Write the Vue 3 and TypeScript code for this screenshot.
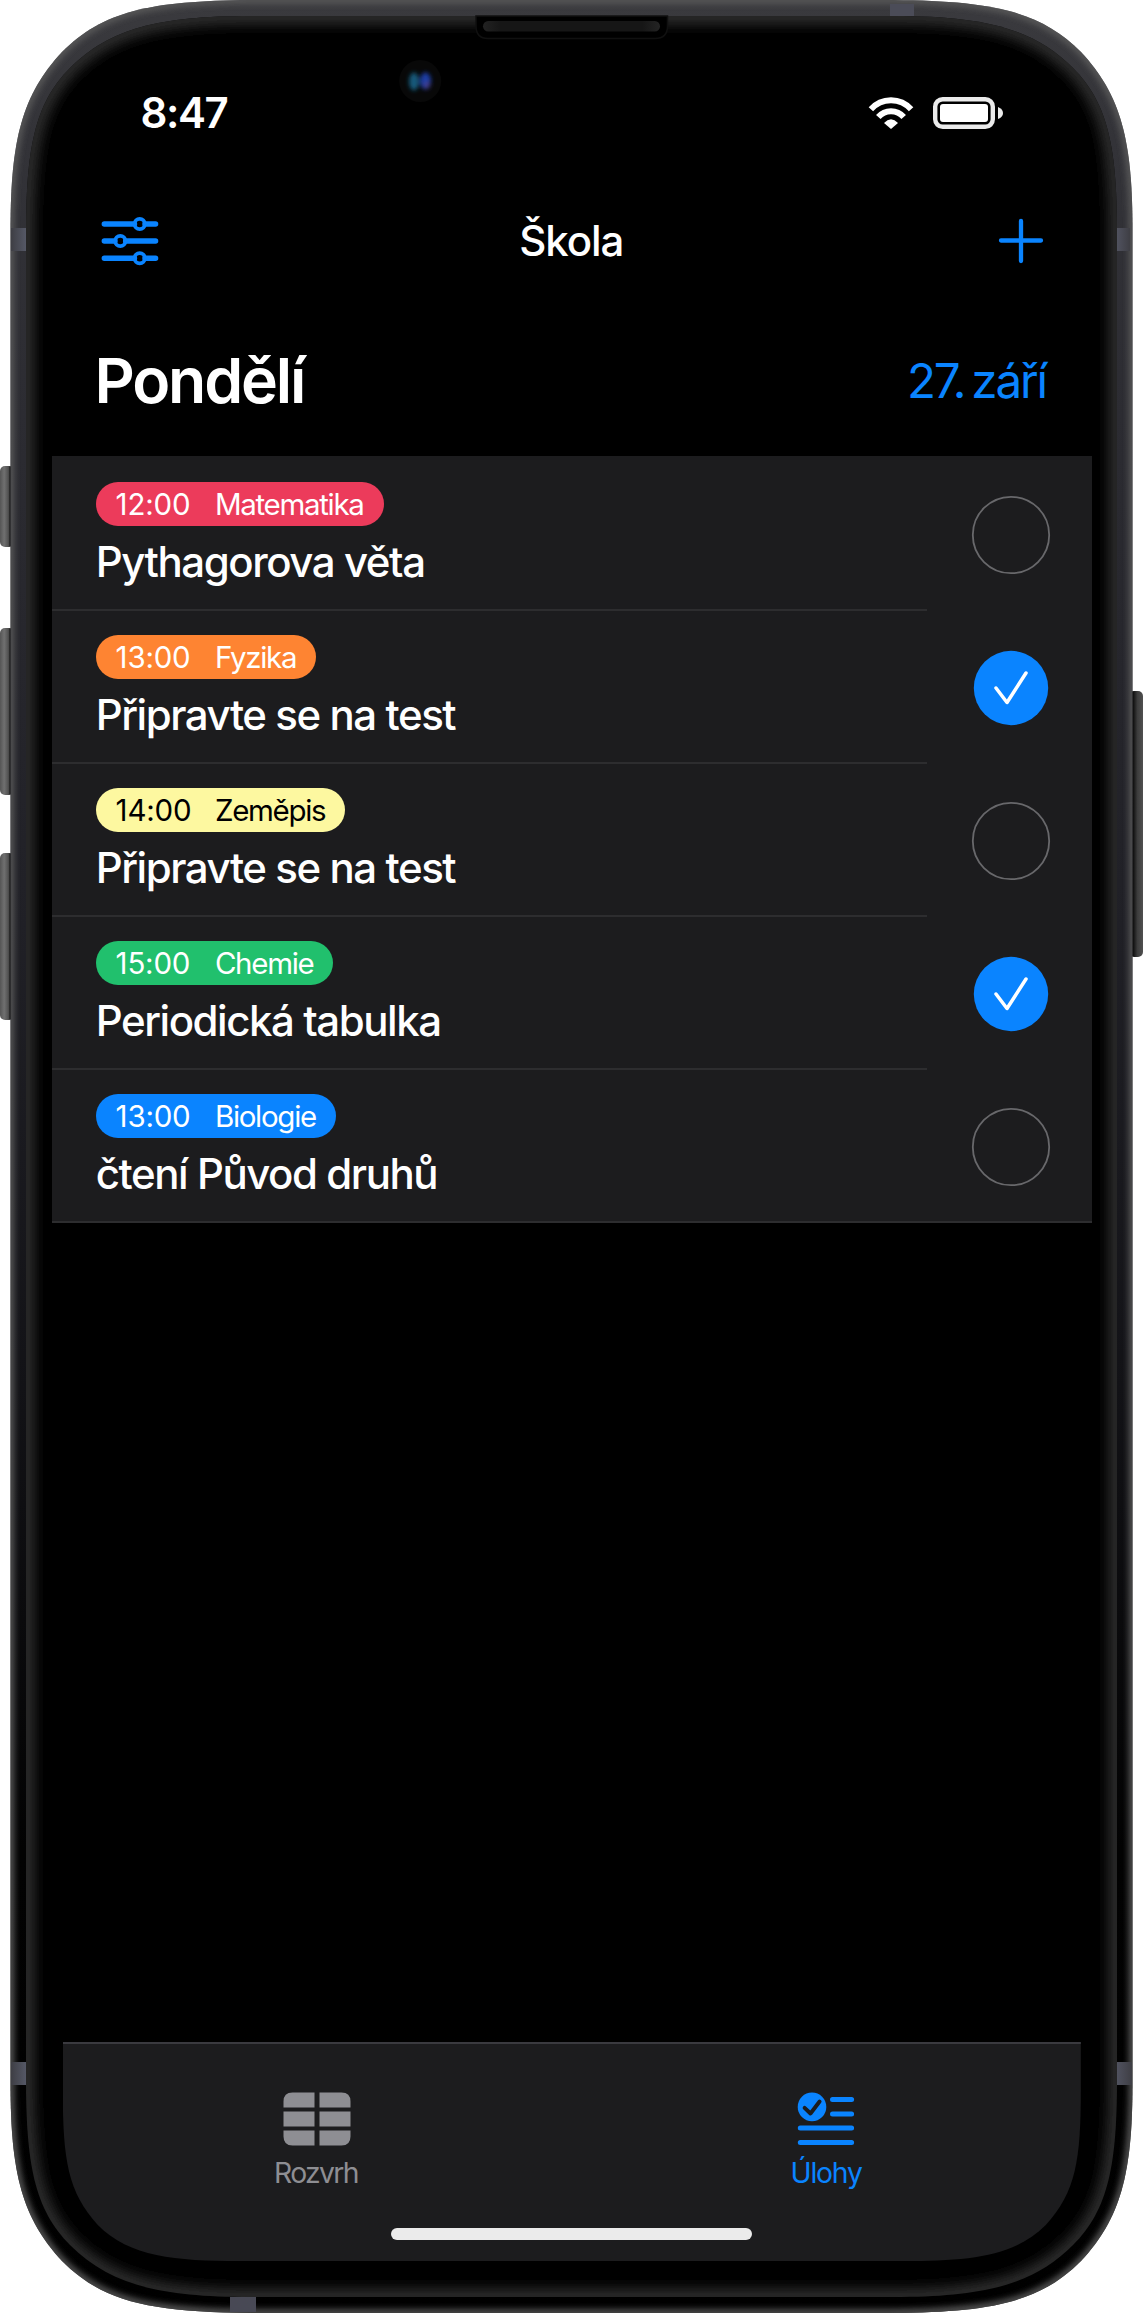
<script setup lang="ts">
interface Task {
  time: string
  subject: string
  title: string
  color: string
  ink: string
  done: boolean
}

const tasks: Task[] = [
  { time: '12:00', subject: 'Matematika', title: 'Pythagorova věta', color: '#ec3b5b', ink: '#fff', done: false },
  { time: '13:00', subject: 'Fyzika', title: 'Připravte se na test', color: '#fe8432', ink: '#fff', done: true },
  { time: '14:00', subject: 'Zeměpis', title: 'Připravte se na test', color: '#fdf8a0', ink: '#000', done: false },
  { time: '15:00', subject: 'Chemie', title: 'Periodická tabulka', color: '#21c06d', ink: '#fff', done: true },
  { time: '13:00', subject: 'Biologie', title: 'čtení Původ druhů', color: '#0a84ff', ink: '#fff', done: false },
]

const outer =
  'M10.5 230C10.5 140 22 95 62 52C103 11 150 1 250 0H893C993 1 1040 11 1081 52C1121 95 1132.5 140 1132.5 230V2083C1132.5 2173 1121 2218 1081 2261C1040 2302 993 2312 893 2313H250C150 2312 103 2302 62 2261C22 2218 10.5 2173 10.5 2083Z'
const inner =
  'M26 235C26 150 34 104 70 68C110 28 160 16 250 16H893C983 16 1033 28 1073 68C1109 104 1117 150 1117 235V2078C1117 2163 1109 2209 1073 2245C1033 2285 983 2297 893 2297H250C160 2297 110 2285 70 2245C34 2209 26 2163 26 2078Z'
</script>

<template>
  <main class="device">
    <svg class="shell" width="1143" height="2313" viewBox="0 0 1143 2313" aria-hidden="true">
      <defs>
        <linearGradient id="metal" x1="0" y1="0" x2="0" y2="1">
          <stop offset="0" stop-color="#3a3a3e" />
          <stop offset=".06" stop-color="#333338" />
          <stop offset=".18" stop-color="#2c2c32" />
          <stop offset=".4" stop-color="#202026" />
          <stop offset=".6" stop-color="#121216" />
          <stop offset=".8" stop-color="#020202" />
          <stop offset="1" stop-color="#000" />
        </linearGradient>
        <linearGradient id="keyLeft">
          <stop offset="0" stop-color="#555" />
          <stop offset=".3" stop-color="#707070" />
          <stop offset=".6" stop-color="#505050" />
          <stop offset=".75" stop-color="#080808" />
        </linearGradient>
        <linearGradient id="keyRight">
          <stop offset=".25" stop-color="#080808" />
          <stop offset=".6" stop-color="#3c3c3c" />
          <stop offset="1" stop-color="#505050" />
        </linearGradient>
        <linearGradient id="bandLeft">
          <stop offset="0" stop-color="#3e3e44" />
          <stop offset="1" stop-color="#555866" />
        </linearGradient>
        <linearGradient id="bandRight">
          <stop offset="0" stop-color="#50525f" />
          <stop offset="1" stop-color="#3e3e44" />
        </linearGradient>
        <linearGradient id="speaker">
          <stop offset="0" stop-color="#222" />
          <stop offset=".1" stop-color="#161616" />
          <stop offset=".9" stop-color="#161616" />
          <stop offset="1" stop-color="#242424" />
        </linearGradient>
        <filter id="soft" x="-5%" y="-5%" width="110%" height="110%"><feGaussianBlur stdDeviation="3" /></filter>
        <filter id="glow" x="-5%" y="-5%" width="110%" height="110%"><feGaussianBlur stdDeviation="6.5" /></filter>
        <filter id="lens" x="-50%" y="-50%" width="200%" height="200%"><feGaussianBlur stdDeviation="2.2" /></filter>
        <clipPath id="outerClip"><path :d="outer" /></clipPath>
        <clipPath id="innerClip"><path :d="inner" /></clipPath>
      </defs>

      <rect x="0" y="466" width="14" height="81" rx="5" fill="url(#keyLeft)" />
      <rect x="0" y="628" width="14" height="167" rx="5" fill="url(#keyLeft)" />
      <rect x="0" y="853" width="14" height="167" rx="5" fill="url(#keyLeft)" />
      <rect x="1129" y="691" width="14" height="266" rx="5" fill="url(#keyRight)" />

      <path :d="outer" fill="url(#metal)" />
      <g clip-path="url(#outerClip)">
        <path :d="outer" fill="none" stroke="#5a5a5a" stroke-width="7" filter="url(#soft)" />
        <rect x="11" y="228" width="15" height="23" fill="url(#bandLeft)" />
        <rect x="1117" y="228" width="13" height="23" fill="url(#bandRight)" />
        <rect x="11" y="2062" width="15" height="23" fill="url(#bandLeft)" />
        <rect x="1117" y="2062" width="15" height="23" fill="url(#bandRight)" />
        <rect x="890" y="4" width="24" height="12" fill="#4b4c58" />
        <rect x="230" y="2297" width="26" height="15" fill="#484955" />
      </g>

      <path :d="inner" fill="#000" />
      <g clip-path="url(#innerClip)">
        <path :d="inner" fill="none" stroke="#303030" stroke-width="15" filter="url(#glow)" />
      </g>

      <path d="M476 16V26Q476 38.5 488 38.5H655Q667.5 38.5 667.5 26V16Z" fill="#000" stroke="#101010" stroke-width="1.5" />
      <rect x="483" y="21" width="177" height="10.5" rx="5.2" fill="url(#speaker)" />
      <circle cx="420.2" cy="81" r="21" fill="#080808" />
      <g filter="url(#lens)">
        <ellipse cx="414" cy="81.5" rx="5" ry="9" fill="#195a7c" />
        <ellipse cx="425.5" cy="81" rx="5.5" ry="8.5" fill="#1d3da4" />
        <ellipse cx="427" cy="85" rx="3" ry="3.5" fill="#433c88" />
      </g>
    </svg>

    <div class="screen">
      <div class="status">
        <span class="clock">8:47</span>
        <svg class="signal" width="136" height="34" viewBox="868 96 136 34" aria-hidden="true">
          <g fill="none" stroke="#fff">
            <path d="M870.9 109.3A26.8 26.8 0 0 1 911.1 109.3" stroke-width="5.9" />
            <path d="M878.3 117A16.8 16.8 0 0 1 903.7 117" stroke-width="6" />
          </g>
          <path d="M884 123Q891 115.6 898 123L891 129Z" fill="#fff" />
          <rect x="935.2" y="99.2" width="57.6" height="27.6" rx="7.5" fill="none" stroke="#ebebeb" stroke-width="4.4" />
          <rect x="940" y="104" width="48" height="18" rx="3" fill="#fff" />
          <path d="M998 107Q1003 109 1003 113T998 119Z" fill="#ebebeb" />
        </svg>
      </div>

      <header class="nav">
        <svg width="58" height="50" viewBox="101 216 58 50" fill="none" stroke="#0a84ff" stroke-linecap="round" aria-hidden="true">
          <path d="M104.3 224H134.5M145 224H155.6M104.3 241H115M125.6 241H155.6M104.3 258.2H134.5M145 258.2H155.6" stroke-width="5.4" />
          <g stroke-width="3.8">
            <circle cx="139.7" cy="224" r="5.1" />
            <circle cx="120.3" cy="241" r="5.1" />
            <circle cx="139.7" cy="258.2" r="5.1" />
          </g>
        </svg>
        <h1>Škola</h1>
        <svg width="58" height="46" viewBox="986.5 218 58 46" fill="none" stroke="#0a84ff" stroke-width="4.3" stroke-linecap="round" aria-hidden="true">
          <path d="M1001.5 240.5H1041.5M1021.5 221V261" />
        </svg>
      </header>

      <div class="day">
        <h2>Pondělí</h2>
        <span class="date">27. září</span>
      </div>

      <ul class="list">
        <li v-for="(task, i) in tasks" :key="i" class="row">
          <div class="info">
            <div class="badge" :style="{ background: task.color, color: task.ink }">
              <span class="time">{{ task.time }}</span>
              <span class="subject">{{ task.subject }}</span>
            </div>
            <div class="title">{{ task.title }}</div>
          </div>
          <svg class="toggle" width="80" height="80" viewBox="-40 -40 80 80" fill="none" aria-hidden="true">
            <template v-if="task.done">
              <circle r="37.2" fill="#0a84ff" />
              <path d="M-15 0L-4 14.5L15 -15" stroke="#fff" stroke-width="3.5" stroke-linecap="round" stroke-linejoin="round" />
            </template>
            <circle v-else r="38.2" stroke="#68686b" stroke-width="1.8" />
          </svg>
        </li>
      </ul>

      <nav class="tabs">
        <div class="tab">
          <svg width="68" height="54" viewBox="282.5 2091.5 68 54" fill="#8e8e93" aria-hidden="true">
            <path d="M314 2092V2107H283V2101Q283 2092 292 2092ZM319 2092H341Q350 2092 350 2101V2107H319ZM283 2111H314V2126H283ZM319 2111H350V2126H319ZM283 2130H314V2145H292Q283 2145 283 2136ZM319 2130H350V2136Q350 2145 341 2145H319Z" />
          </svg>
          <span class="wide">Rozvrh</span>
        </div>
        <div class="tab active">
          <svg width="58" height="54" viewBox="797.7 2091.5 58 54" fill="none" stroke-linecap="round" aria-hidden="true">
            <circle cx="812.7" cy="2106.4" r="14.3" fill="#0a84ff" />
            <path d="M805.3 2107.3L811.2 2113L820.3 2101" stroke="#1c1c1e" stroke-width="3.9" stroke-linejoin="round" />
            <path d="M833.2 2099H852.3M833.2 2113.5H852.3M801 2127.6H852.3M801 2142H852.3" stroke="#0a84ff" stroke-width="5" />
          </svg>
          <span>Úlohy</span>
        </div>
        <i class="home"></i>
      </nav>
    </div>
  </main>
</template>

<style>
body {
  margin: 0;
  background: #fff;
}
</style>

<style scoped>
.device {
  position: relative;
  width: 1143px;
  height: 2313px;
  overflow: hidden;
  font-family: Inter, 'Liberation Sans', sans-serif;
  color: #fff;
}
.shell {
  position: absolute;
  inset: 0;
}
.screen {
  position: relative;
  display: flex;
  flex-direction: column;
  height: 2261px;
  box-sizing: border-box;
  padding-top: 88px;
}
.status {
  display: flex;
  justify-content: space-between;
  align-items: center;
  height: 50px;
  padding: 0 139px 0 140.5px;
}
.clock {
  font-size: 42px;
  font-weight: 600;
  line-height: 50px;
  letter-spacing: -1.4px;
}
.nav {
  display: flex;
  justify-content: space-between;
  align-items: center;
  height: 60px;
  margin-top: 73px;
  padding: 0 98.5px 0 101px;
}
h1,
h2 {
  margin: 0;
}
h1 {
  padding-right: 3px;
  font-size: 42px;
  font-weight: 500;
  line-height: 60px;
  letter-spacing: -1.1px;
}
.day {
  display: flex;
  justify-content: space-between;
  align-items: center;
  height: 185px;
  box-sizing: border-box;
  padding: 32px 97px 0 94.5px;
}
h2 {
  font-size: 62.5px;
  font-weight: 600;
  line-height: 80px;
  letter-spacing: -2.15px;
}
.date {
  margin-top: 3px;
  font-size: 47.5px;
  font-weight: 400;
  line-height: 80px;
  letter-spacing: -2.1px;
  word-spacing: -4.2px;
  color: #0a84ff;
}
.list {
  list-style: none;
  margin: 0 51.3px 0 51.7px;
  padding: 0;
  background: #1c1c1e;
}
.row {
  display: flex;
  height: 153px;
}
.info {
  width: 875px;
  height: 155px;
  box-sizing: border-box;
  padding: 26px 0 0 44px;
  border-bottom: 2px solid #2d2d2f;
}
.row:last-child {
  border-bottom: 2px solid #2d2d2f;
  box-sizing: content-box;
}
.row:last-child .info {
  height: 153px;
  border-bottom: 0;
}
.badge {
  display: flex;
  align-items: center;
  width: max-content;
  height: 44px;
  padding: 0 19.9px;
  border-radius: 22px;
  box-sizing: border-box;
  font-size: 29.5px;
  font-weight: 400;
}
.time {
  width: 75px;
  letter-spacing: -0.2px;
}
.subject {
  margin-left: 24.3px;
  letter-spacing: -1.3px;
}
.title {
  margin-top: 11px;
  font-size: 42px;
  font-weight: 500;
  line-height: 50px;
  letter-spacing: -1.44px;
}
.toggle {
  margin: 38.5px 0 0 44.5px;
}
.tabs {
  position: relative;
  display: flex;
  height: 219px;
  margin: auto 62.5px 0 62.8px;
  box-sizing: border-box;
  padding-top: 47.5px;
  border-top: 2px solid #3a3a3f;
  background: #1c1c1e;
  clip-path: path('M0 0H1018V48C1018 118 1013 150 983 183C951 215 906 219 841 219H177C112 219 67 215 35 183C5 150 0 118 0 48Z');
}
.tab {
  flex: 1;
  display: flex;
  flex-direction: column;
  align-items: center;
  font-size: 28.3px;
  font-weight: 400;
  line-height: 36px;
  letter-spacing: -1.2px;
  color: #8e8e93;
}
.tab span {
  margin-top: 9px;
}
.tab .wide {
  padding-right: 2.5px;
  letter-spacing: -1.65px;
}
.tab.active {
  color: #0a84ff;
}
.home {
  position: absolute;
  left: 328px;
  bottom: 21px;
  width: 361px;
  height: 12px;
  border-radius: 6px;
  background: #ebebeb;
}
</style>
